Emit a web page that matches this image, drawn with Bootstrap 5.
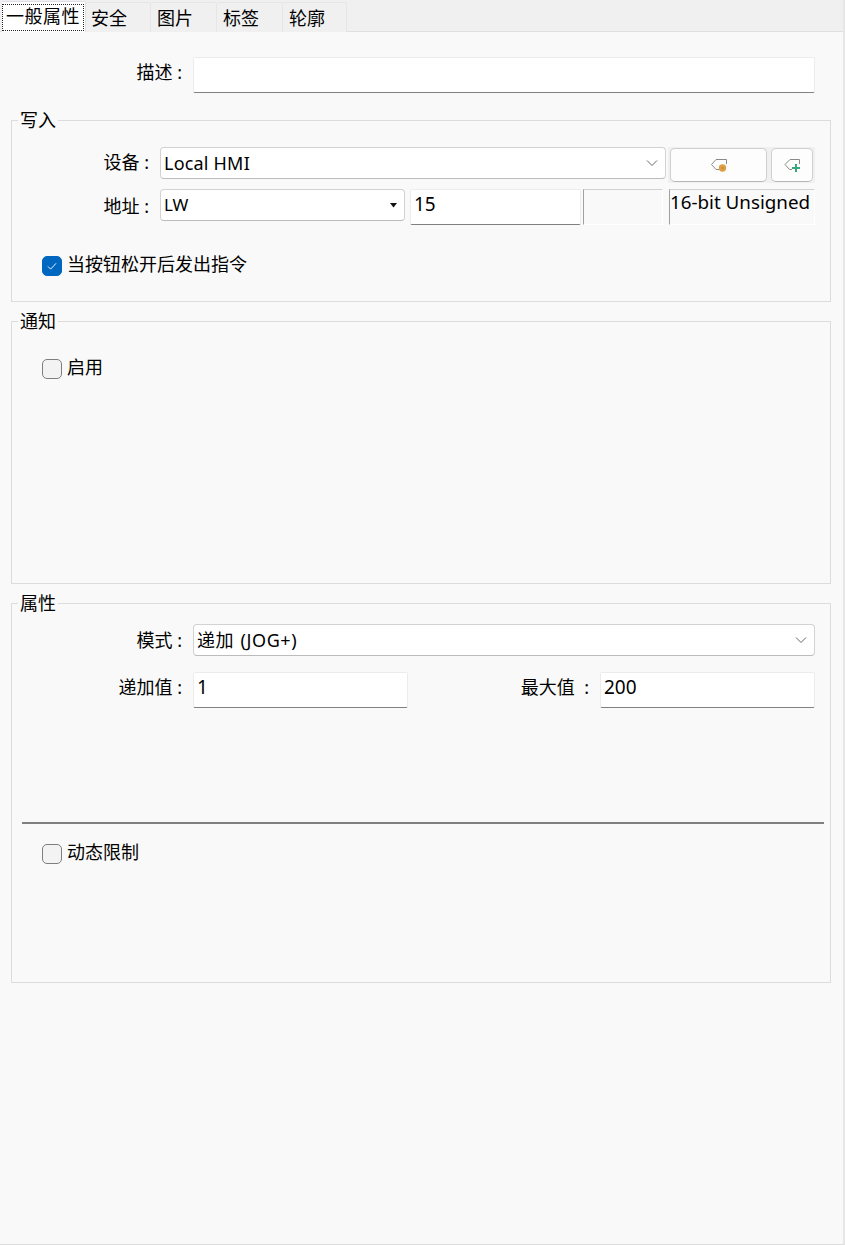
<!DOCTYPE html>
<html lang="zh-CN">
<head>
<meta charset="utf-8">
<title>一般属性</title>
<link href="https://cdn.jsdelivr.net/npm/bootstrap@5.3.0/dist/css/bootstrap.min.css" rel="stylesheet">
<style>
html,body{height:100%;}
body{background:#f9f9f9;color:#000;font-family:"Noto Sans","Noto Sans CJK SC",sans-serif;font-size:18px;line-height:24px;overflow:hidden;}
.pane{height:1245px;width:845px;border-right:2px solid #e6e6e6;border-bottom:1px solid #dcdcdc;}
.tabbar{height:32px;background:#f0f0f0;border-bottom:1px solid #e0e0e0;padding-top:2px;padding-left:2px;flex-wrap:nowrap;}
.tabbar .nav-link{height:30px;padding:3px 0 0 6px;font-size:18px;line-height:24px;color:#000;background:#f0f0f0;border:1px solid #e6e6e6;border-width:1px 1px 0 0;border-radius:2px 2px 0 0;margin:0;}
.tabbar .tab1{width:84px;height:31px;margin-top:-1px;background:#f9f9f9;padding:0;border-color:#e6e6e6;position:relative;z-index:1;}
.tabbar .tab1 span{display:block;width:82px;height:27px;margin-top:2px;outline:1px dotted #222;outline-offset:-1px;padding-left:4px;line-height:24px;letter-spacing:.5px;white-space:nowrap;}
.tabbar .t2{width:65px;padding-left:5px;}.t3{width:66px;}.t4{width:66px;}.t5{width:64px;}
.desc-row{padding-top:25px;margin-bottom:27px;}
.lbl{flex:none;text-align:right;white-space:pre;}
.lbl-d{width:182px;margin-right:11px;margin-bottom:6px;}
.lbl-a{width:170px;margin-right:11px;}
.lbl-b{width:137px;margin-right:11px;}
.up-2{margin-bottom:6px;}
.down-3{padding-top:3px;}
.down-4{padding-top:4px;}
.down-5{padding-top:5px;}
.gbox{margin-left:11px;width:820px;border:1px solid #dcdcdc;}
.gbox-1{height:182px;}
.gbox-2{height:263px;margin-top:19px;}
.gbox-3{height:380px;margin-top:19px;}
.gtitle{width:fit-content;height:24px;margin:-13px 0 0 6px;padding:0 2px;background:#f9f9f9;line-height:24px;}
.field{height:36px;background:#fff;border:1px solid #ececec;border-bottom:1px solid #808080;border-radius:2px;padding:0 3px 7px;color:#000;font-size:19px;line-height:24px;box-shadow:none;}
.drop{background-color:#fff;border:1px solid #d2d2d2;border-bottom-color:#bcbcbc;border-radius:4px;padding:0 3px;color:#000;font-size:18px;line-height:24px;box-shadow:none;background-repeat:no-repeat;}
.drop-chev{height:32px;background-image:url("data:image/svg+xml,%3csvg xmlns='http://www.w3.org/2000/svg' viewBox='0 0 12 8'%3e%3cpath fill='none' stroke='%23666' stroke-width='1' d='M1 1.500l5 5 5-5'/%3e%3c/svg%3e");background-position:right 7px center;background-size:12px 8px;}
.drop-mini{height:32px;font-size:17px;background-image:url("data:image/svg+xml,%3csvg xmlns='http://www.w3.org/2000/svg' viewBox='0 0 8 5'%3e%3cpath fill='%23111' d='M0 0h7L3.500 4.500z'/%3e%3c/svg%3e");background-position:right 6px center;background-size:8px 5px;}
.w-dev{width:506px;letter-spacing:.2px;}
.w-mode{width:622px;letter-spacing:.6px;word-spacing:1px;}
.w-desc{width:622px;}
.w-lw{width:245px;}
.w-num{width:215px;}
.w-addr{width:171px;margin-left:5px;}
.row-dev{margin-top:15px;height:34px;}
.row-addr{margin-top:8px;height:36px;}
.row-mode{margin-top:9px;height:32px;}
.row-step{margin-top:16px;height:36px;}
.tools{margin-left:2px;padding:1px 2px;background:#f0f0f0;height:36px;}
.tool{height:34px;padding:0;background:#fdfdfd;border:1px solid #cfcfcf;border-bottom-color:#b8b8b8;border-radius:5px;display:flex;align-items:center;justify-content:center;}
.tool-a{width:97px;margin-right:4px;}
.tool-b{width:42px;}
.ro{height:36px;background:#f9f9f9;border-top:1px solid #d2d2d2;border-left:1px solid #a0a0a0;border-bottom:1px solid #fff;border-right:1px solid #fff;}
.ro-a{width:80px;margin-left:2px;}
.ro-b{width:146px;margin-left:6px;font-size:18.800px;line-height:24px;white-space:nowrap;overflow:hidden;}
.chk{margin:0;padding:0;display:flex;align-items:center;height:20px;}
.chk .form-check-input{flex:none;float:none;width:20px;height:20px;margin:0 5px 0 0;background-color:#f3f3f3;border:1px solid #7e7e7e;border-radius:5px;box-shadow:none;}
.chk .form-check-input:checked{background-color:#0067c0;border-color:#0067c0;background-image:url("data:image/svg+xml,%3csvg xmlns='http://www.w3.org/2000/svg' viewBox='0 0 20 20'%3e%3cpath fill='none' stroke='%23fff' stroke-width='1' d='M5.500 10.500l3 3 6-6.500'/%3e%3c/svg%3e");}
.chk .form-check-label{line-height:24px;margin-bottom:4px;white-space:nowrap;}
.chk-1{margin:29px 0 0 30px;}
.chk-2{margin:24px 0 0 30px;}
.chk-3{margin:18px 0 0 30px;}
.sep{height:2px;margin:114px 6px 0 10px;background:#808080;opacity:1;border:0;}
.lbl-max{margin-left:auto;margin-right:11px;margin-bottom:6px;}
.w-max{width:215px;margin-right:15px;}
</style>
</head>
<body>
<div class="pane d-flex flex-column">
  <ul class="nav nav-tabs tabbar">
    <li class="nav-item"><a class="nav-link tab1 active" href="#"><span>一般属性</span></a></li>
    <li class="nav-item"><a class="nav-link t2" href="#">安全</a></li>
    <li class="nav-item"><a class="nav-link t3" href="#">图片</a></li>
    <li class="nav-item"><a class="nav-link t4" href="#">标签</a></li>
    <li class="nav-item"><a class="nav-link t5" href="#">轮廓</a></li>
  </ul>

  <div class="d-flex align-items-center desc-row">
    <label class="lbl lbl-d" for="desc">描述 :</label>
    <input id="desc" class="form-control field w-desc" type="text">
  </div>

  <div class="gbox gbox-1">
    <div class="gtitle">写入</div>
    <div class="d-flex row-dev">
      <label class="lbl lbl-b down-3" for="dev">设备 :</label>
      <select id="dev" class="form-select drop drop-chev w-dev"><option>Local HMI</option></select>
      <div class="d-flex tools">
        <button type="button" class="btn tool tool-a" aria-label="tag">
          <svg width="18" height="14" viewBox="0 0 18 14"><path d="M16.500 6V1.500H6L1.500 6.500l4.500 5H9" fill="none" stroke="#8a8a8a"/><circle cx="12.500" cy="10" r="3.700" fill="#dd9f42"/><circle cx="12.500" cy="10" r="1.300" fill="#c98f3a"/></svg>
        </button>
        <button type="button" class="btn tool tool-b" aria-label="add tag">
          <svg width="18" height="14" viewBox="0 0 18 14"><path d="M16.500 6V1.500H7L2 6.500l4.500 5H9" fill="none" stroke="#8a8a8a"/><path d="M13 6v8M9 10h8" fill="none" stroke="#3aa67c" stroke-width="2"/></svg>
        </button>
      </div>
    </div>
    <div class="d-flex row-addr">
      <label class="lbl lbl-b down-5" for="addr">地址 :</label>
      <select id="addr" class="form-select drop drop-mini w-lw"><option>LW</option></select>
      <input class="form-control field w-addr" type="text" value="15" aria-label="15">
      <div class="ro ro-a"></div>
      <div class="ro ro-b">16-bit Unsigned</div>
    </div>
    <div class="form-check chk chk-1">
      <input class="form-check-input" type="checkbox" id="c1" checked>
      <label class="form-check-label" for="c1">当按钮松开后发出指令</label>
    </div>
  </div>

  <div class="gbox gbox-2">
    <div class="gtitle">通知</div>
    <div class="form-check chk chk-2">
      <input class="form-check-input" type="checkbox" id="c2">
      <label class="form-check-label" for="c2">启用</label>
    </div>
  </div>

  <div class="gbox gbox-3">
    <div class="gtitle">属性</div>
    <div class="d-flex row-mode">
      <label class="lbl lbl-a down-4" for="mode">模式 :</label>
      <select id="mode" class="form-select drop drop-chev w-mode"><option>递加 (JOG+)</option></select>
    </div>
    <div class="d-flex row-step align-items-center">
      <label class="lbl lbl-a up-2" for="step">递加值 :</label>
      <input id="step" class="form-control field w-num flex-grow-0" type="text" value="1">
      <label class="lbl lbl-max" for="max">最大值  :</label>
      <input id="max" class="form-control field w-max flex-grow-0" type="text" value="200">
    </div>
    <hr class="sep">
    <div class="form-check chk chk-3">
      <input class="form-check-input" type="checkbox" id="c3">
      <label class="form-check-label" for="c3">动态限制</label>
    </div>
  </div>
</div>
<script src="https://cdn.jsdelivr.net/npm/bootstrap@5.3.0/dist/js/bootstrap.bundle.min.js"></script>
</body>
</html>
